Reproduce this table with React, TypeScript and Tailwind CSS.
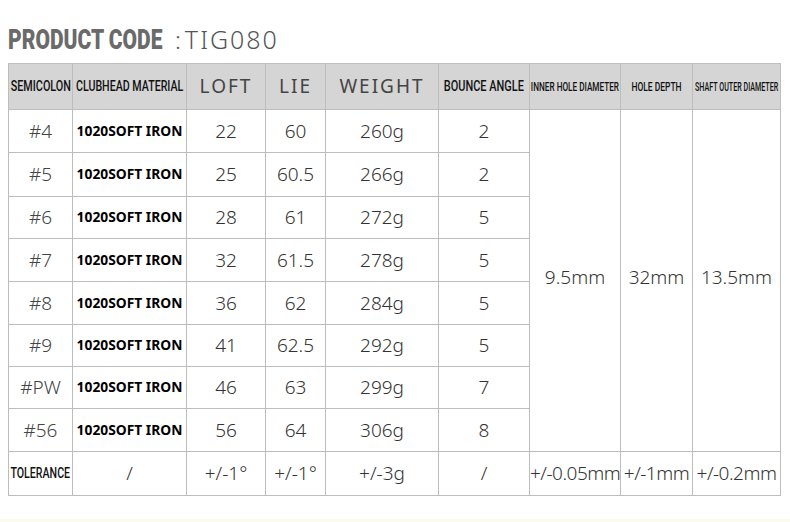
import React from "react";

const rows = [
  { no: "#4", loft: "22", lie: "60", weight: "260g", bounce: "2", h: "h-[43px]" },
  { no: "#5", loft: "25", lie: "60.5", weight: "266g", bounce: "2", h: "h-[44px]" },
  { no: "#6", loft: "28", lie: "61", weight: "272g", bounce: "5", h: "h-[42px]" },
  { no: "#7", loft: "32", lie: "61.5", weight: "278g", bounce: "5", h: "h-[43px]" },
  { no: "#8", loft: "36", lie: "62", weight: "284g", bounce: "5", h: "h-[43px]" },
  { no: "#9", loft: "41", lie: "62.5", weight: "292g", bounce: "5", h: "h-[42px]" },
  { no: "#PW", loft: "46", lie: "63", weight: "299g", bounce: "7", h: "h-[42px]" },
  { no: "#56", loft: "56", lie: "64", weight: "306g", bounce: "8", h: "h-[43px]" },
];

const cell = "border border-[#bdbdbd] text-center align-middle p-0";
const num = "font-['Noto_Sans',sans-serif] font-light text-[19px] text-[#333]";
const head = "font-['Noto_Sans',sans-serif] font-normal text-[19px] tracking-[2px] text-[#444]";

// condensed header label: laid out at full width, squeezed with scale-x, centred even when wider than the cell
function Narrow({ children, scale, size }: { children: React.ReactNode; scale: string; size: string }) {
  return (
    <div className="flex justify-center">
      <span
        className={`inline-block shrink-0 whitespace-nowrap font-['Roboto',sans-serif] font-medium text-[#111] origin-center ${size} ${scale}`}
      >
        {children}
      </span>
    </div>
  );
}

export default function App() {
  return (
    <div className="w-[790px] h-[522px] bg-white flex flex-col relative overflow-hidden">
      <div className="flex items-baseline pl-[8px] pt-[26px] h-[63px] leading-none text-[#6a6a6a]">
        <div className="flex justify-start w-[160px] shrink-0">
          <span className="inline-block shrink-0 origin-left scale-x-[0.75] whitespace-nowrap font-['Roboto',sans-serif] font-black text-[28px]">
            PRODUCT CODE
          </span>
        </div>
        <span className="font-['Noto_Sans',sans-serif] font-light text-[24px] ml-[7px] text-[#555]">:</span>
        <span className="font-['Noto_Sans',sans-serif] font-light text-[25px] ml-[4px] tracking-[2px] text-[#555]">TIG080</span>
      </div>

      <table className="ml-[8px] w-[772px] table-fixed border-collapse">
        <colgroup>
          <col className="w-[64px]" />
          <col className="w-[114px]" />
          <col className="w-[79px]" />
          <col className="w-[60px]" />
          <col className="w-[113px]" />
          <col className="w-[91px]" />
          <col className="w-[91px]" />
          <col className="w-[72px]" />
          <col className="w-[88px]" />
        </colgroup>
        <thead>
          <tr className="h-[46px] bg-[#d5d5d5]">
            <th className={cell}>
              <Narrow size="text-[15px]" scale="scale-x-[0.72]">SEMICOLON</Narrow>
            </th>
            <th className={cell}>
              <Narrow size="text-[15px]" scale="scale-x-[0.71]">CLUBHEAD MATERIAL</Narrow>
            </th>
            <th className={`${cell} ${head}`}>LOFT</th>
            <th className={`${cell} ${head}`}>LIE</th>
            <th className={`${cell} ${head}`}>WEIGHT</th>
            <th className={cell}>
              <Narrow size="text-[15px]" scale="scale-x-[0.73]">BOUNCE ANGLE</Narrow>
            </th>
            <th className={cell}>
              <Narrow size="text-[13px]" scale="scale-x-[0.63]">INNER HOLE DIAMETER</Narrow>
            </th>
            <th className={cell}>
              <Narrow size="text-[13px]" scale="scale-x-[0.65]">HOLE DEPTH</Narrow>
            </th>
            <th className={cell}>
              <Narrow size="text-[13px]" scale="scale-x-[0.55]">SHAFT OUTER DIAMETER</Narrow>
            </th>
          </tr>
        </thead>
        <tbody>
          {rows.map((r, i) => (
            <tr key={r.no} className={r.h}>
              <td className={`${cell} ${num} text-[#444]`}>{r.no}</td>
              <td className={`${cell} font-['Noto_Sans',sans-serif] font-bold text-[13.8px] text-black whitespace-nowrap`}>
                1020SOFT IRON
              </td>
              <td className={`${cell} ${num}`}>{r.loft}</td>
              <td className={`${cell} ${num}`}>{r.lie}</td>
              <td className={`${cell} ${num}`}>{r.weight}</td>
              <td className={`${cell} ${num}`}>{r.bounce}</td>
              {i === 0 && (
                <>
                  <td rowSpan={8} className={`${cell} ${num} pb-[6px]`}>9.5mm</td>
                  <td rowSpan={8} className={`${cell} ${num} pb-[6px]`}>32mm</td>
                  <td rowSpan={8} className={`${cell} ${num} pb-[6px]`}>13.5mm</td>
                </>
              )}
            </tr>
          ))}
          <tr className="h-[44px]">
            <td className={cell}>
              <Narrow size="text-[14px]" scale="scale-x-[0.76]">TOLERANCE</Narrow>
            </td>
            <td className={`${cell} ${num}`}>/</td>
            <td className={`${cell} ${num}`}>+/-1°</td>
            <td className={`${cell} ${num}`}>+/-1°</td>
            <td className={`${cell} ${num}`}>+/-3g</td>
            <td className={`${cell} ${num}`}>/</td>
            <td className={`${cell} ${num} tracking-[-0.5px]`}>+/-0.05mm</td>
            <td className={`${cell} ${num} tracking-[-0.5px]`}>+/-1mm</td>
            <td className={`${cell} ${num} tracking-[-0.5px]`}>+/-0.2mm</td>
          </tr>
        </tbody>
      </table>

      <div className="absolute left-0 right-0 bottom-0 h-[3px] bg-[#fbfbee]" />
    </div>
  );
}
